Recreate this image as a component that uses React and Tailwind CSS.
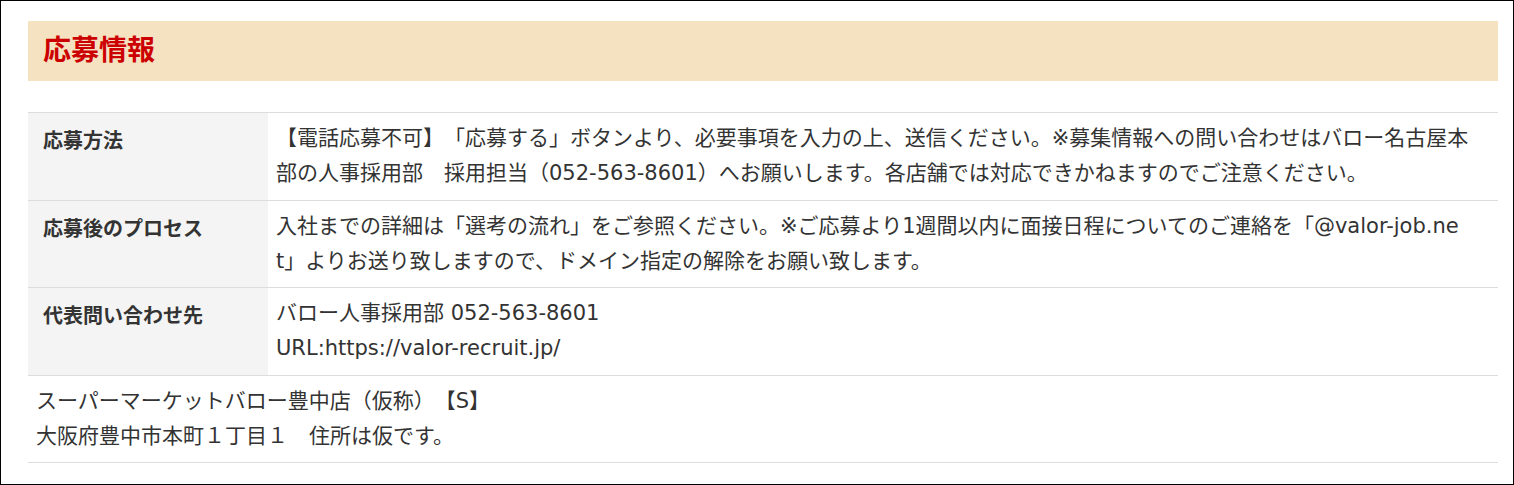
import React from 'react';

const rows = [
    {
        label: '応募方法',
        pb: 'pb-[9px]',
        lines: [
            '【電話応募不可】「応募する」ボタンより、必要事項を入力の上、送信ください。※募集情報への問い合わせはバロー名古屋本',
            '部の人事採用部　採用担当（052-563-8601）へお願いします。各店舗では対応できかねますのでご注意ください。',
        ],
    },
    {
        label: '応募後のプロセス',
        pb: 'pb-2',
        lines: [
            '入社までの詳細は「選考の流れ」をご参照ください。※ご応募より1週間以内に面接日程についてのご連絡を「@valor-job.ne',
            't」よりお送り致しますので、ドメイン指定の解除をお願い致します。',
        ],
    },
    {
        label: '代表問い合わせ先',
        pb: 'pb-[9px]',
        lines: ['バロー人事採用部 052-563-8601', 'URL:https://valor-recruit.jp/'],
    },
];

export default function App() {
    return (
        <div
            className="w-[1514px] h-[485px] border border-black bg-white pl-[27px] pr-[15px] pt-5 text-[#333] overflow-hidden [text-spacing-trim:space-all]"
            style={{ fontFamily: '"DejaVu Sans", "Noto Sans CJK JP", sans-serif' }}
        >
            {/* Heading band */}
            <div className="h-[60px] bg-[#f5e2c0] flex items-center pl-[15px]">
                <h2 className="text-[28px] font-bold text-[#cc0000] leading-none">応募情報</h2>
            </div>

            {/* Info table */}
            <div className="mt-[31px] border-t border-[#dddddd]">
                {rows.map((row) => (
                    <div key={row.label} className="flex border-b border-[#dddddd]">
                        <div className="w-[240px] shrink-0 bg-[#f4f4f4] px-[15px] pt-[11px] text-[20px] font-bold leading-[35px]">
                            {row.label}
                        </div>
                        <div className={`flex-1 px-2 pt-2 ${row.pb} text-[21px] leading-[35px] whitespace-nowrap`}>
                            {row.lines.map((line, i) => (
                                <div key={i}>{line}</div>
                            ))}
                        </div>
                    </div>
                ))}

                {/* Store info */}
                <div className="border-b border-[#dddddd] px-2 pt-2 pb-2 text-[21px] leading-[35px]">
                    <div>スーパーマーケットバロー豊中店（仮称）【S】</div>
                    <div>大阪府豊中市本町１丁目１　住所は仮です。</div>
                </div>
            </div>
        </div>
    );
}
